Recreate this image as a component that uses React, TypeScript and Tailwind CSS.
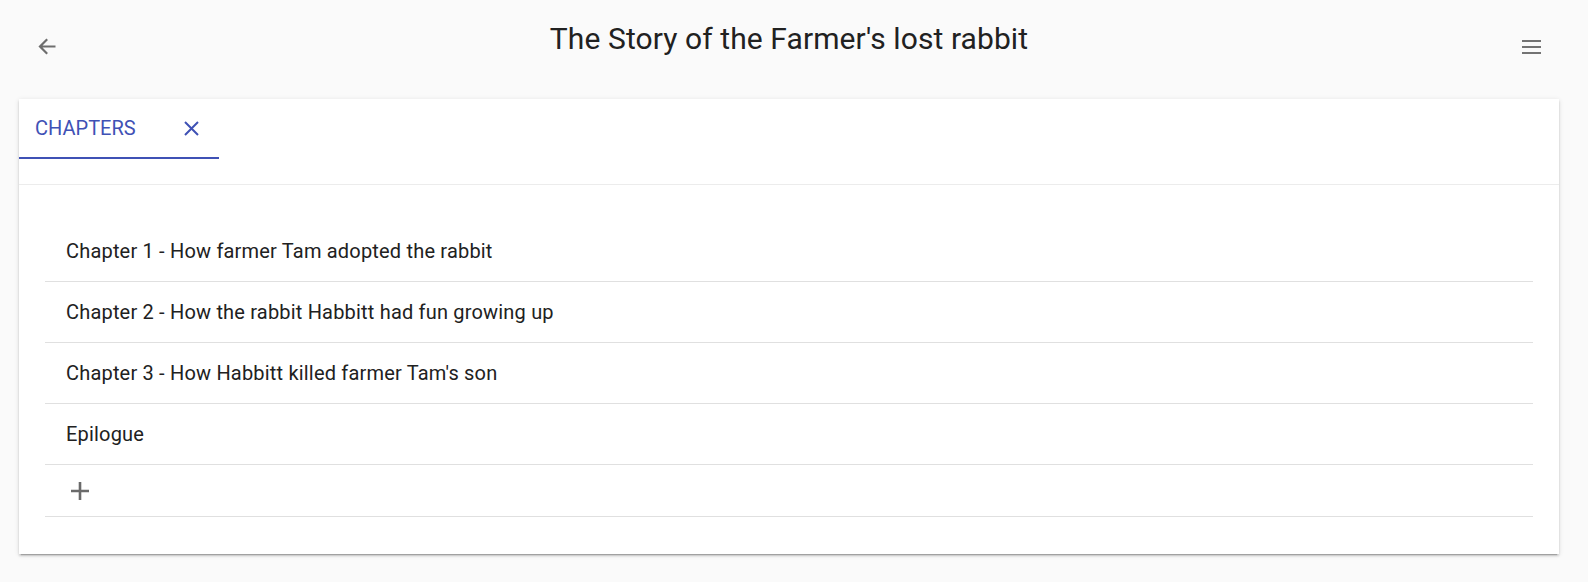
import React from "react";

const chapters = [
  "Chapter 1 - How farmer Tam adopted the rabbit",
  "Chapter 2 - How the rabbit Habbitt had fun growing up",
  "Chapter 3 - How Habbitt killed farmer Tam's son",
  "Epilogue",
];

function BackIcon() {
  return (
    <svg width="18" height="17" viewBox="0 0 18 17" fill="none" aria-hidden>
      <path d="M17.5 8.5H2M9.2 1.3L2 8.5l7.2 7.2" stroke="#6e6e6e" strokeWidth="2.2" />
    </svg>
  );
}

function MenuIcon() {
  return (
    <svg width="19" height="14" viewBox="0 0 19 14" aria-hidden>
      <rect x="0" y="0" width="19" height="2" fill="#737373" />
      <rect x="0" y="6" width="19" height="2" fill="#737373" />
      <rect x="0" y="12" width="19" height="2" fill="#737373" />
    </svg>
  );
}

function CloseIcon() {
  return (
    <svg width="15" height="15" viewBox="0 0 15 15" fill="none" aria-hidden>
      <path d="M1 1l13 13M14 1L1 14" stroke="#3f51b5" strokeWidth="2" />
    </svg>
  );
}

function PlusIcon() {
  return (
    <svg width="18" height="18" viewBox="0 0 18 18" fill="none" aria-hidden>
      <path d="M9 0v18M0 9h18" stroke="#6a6a6a" strokeWidth="2.6" />
    </svg>
  );
}

export default function App() {
  return (
    <div className="min-h-[582px] bg-[#fafafa] font-['Roboto',sans-serif] text-[#212121]">
      {/* header */}
      <div className="flex h-[99px] items-start">
        <div className="w-[70px] pl-[38px] pt-[38px]">
          <BackIcon />
        </div>
        <h1 className="flex-1 pt-[21px] text-center text-[30px] font-normal leading-[36px] tracking-[0.003em] text-[#212121]">
          The Story of the Farmer's lost rabbit
        </h1>
        <div className="w-[80px] pl-[14px] pt-[40px]">
          <MenuIcon />
        </div>
      </div>

      {/* card */}
      <div className="ml-[19px] mr-[29px] bg-white shadow-[0_3px_1px_-2px_rgba(0,0,0,0.2),0_2px_2px_0_rgba(0,0,0,0.14),0_1px_5px_0_rgba(0,0,0,0.12)]">
        <div className="flex h-[60px]">
          <div className="flex w-[200px] items-center justify-between border-b-2 border-[#3f51b5] pl-[16px] pr-[20px]">
            <span className="text-[20px] uppercase text-[#3f51b5]">Chapters</span>
            <CloseIcon />
          </div>
        </div>
        <div className="h-[25px]" />
        <div className="border-t border-[#ececec] px-[26px] pb-[37px] pt-[36px]">
          {chapters.map((c) => (
            <div
              key={c}
              className="flex h-[61px] items-center border-b border-[#e0e0e0] pl-[21px] text-[20px] tracking-[0.00938em]"
            >
              {c}
            </div>
          ))}
          <div className="flex h-[52px] items-center border-b border-[#e0e0e0] pl-[26px]">
            <PlusIcon />
          </div>
        </div>
      </div>
    </div>
  );
}
